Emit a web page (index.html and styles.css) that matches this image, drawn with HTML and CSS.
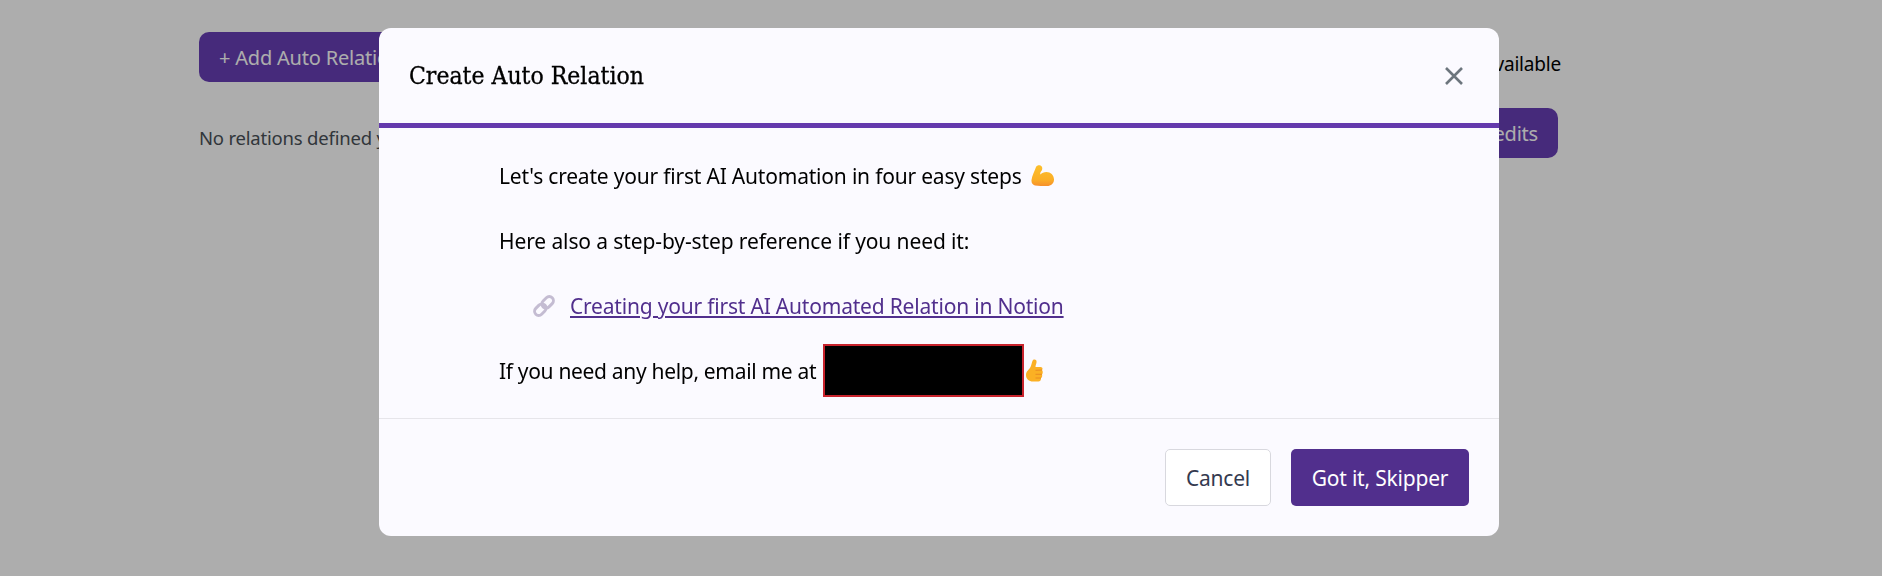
FILE: index.html
```html
<!DOCTYPE html>
<html lang="en">
<head>
    <meta charset="UTF-8">
    <meta name="viewport" content="width=device-width, initial-scale=1.0">
    <title>Create Auto Relation</title>
    <link rel="stylesheet" href="styles.css">
</head>
<body>
    <div class="page">
        <div class="relations">
            <button class="btn btn-primary btn-add">+ Add Auto Relation</button>
            <p class="empty">No relations defined yet</p>
        </div>
        <div class="credits">
            <p class="credits-text">0 credits available</p>
            <button class="btn btn-primary btn-credits">Buy credits</button>
        </div>
    </div>

    <div class="overlay">
        <div class="modal">
            <div class="modal-header">
                <h2 class="modal-title">Create Auto Relation</h2>
                <svg class="close" width="18" height="18" viewBox="0 0 18 18">
                    <path d="M1 1L17 17M17 1L1 17" stroke="#6c757d" stroke-width="2.600" fill="none"/>
                </svg>
            </div>
            <div class="modal-body">
                <p class="line">
                    <span>Let's create your first AI Automation in four easy steps</span>
                    <svg class="emoji-arm" width="23" height="21" viewBox="0 0 23 21">
                        <defs>
                            <linearGradient id="gold" x1="0" y1="0" x2="0" y2="1">
                                <stop offset="0" stop-color="#fcc02c"/>
                                <stop offset="0.700" stop-color="#fbae26"/>
                                <stop offset="1" stop-color="#f68f2c"/>
                            </linearGradient>
                        </defs>
                        <path d="M5 2C6 -.2 10 -.6 11 2C11.700 4 10.800 5.500 10 6.500C9.200 7.500 9 8.500 9.500 9.500C10.500 8 13 7 15.500 7C19.500 7 23 10 23 14.500C23 18.500 20 21 16 21C13 21 8 21.200 4 20.500C1.500 20 .2 18 .5 15C1 11 3.500 6 5 2Z" fill="url(#gold)"/>
                    </svg>
                </p>
                <p class="line line-ref">Here also a step-by-step reference if you need it:</p>
                <p class="line line-link">
                    <svg class="chain" width="22" height="22" viewBox="0 0 24 24">
                        <g fill="none" stroke="#c4bcd2" stroke-width="3.200">
                            <rect x="1" y="11.500" width="14" height="9" rx="4.500" transform="rotate(-45 8 16)"/>
                            <rect x="9" y="3.500" width="14" height="9" rx="4.500" transform="rotate(-45 16 8)"/>
                        </g>
                    </svg>
                    <a class="link" href="#">Creating your first AI Automated Relation in Notion</a>
                </p>
                <p class="line line-help">
                    <span>If you need any help, email me at</span>
                    <span class="redacted"></span>
                    <svg class="emoji-thumb" width="17" height="23" viewBox="0 0 17 23">
                        <path d="M7 1C9 -.2 11 1 10.500 3.500C10.200 5 9.500 6.500 9.500 8L14.500 8C16.500 8 17 10 16 11C17 12 17 14.500 16 15.500C16.500 17 16 18.500 15 19C15.200 21 14 22.500 12.500 22.500L7 22.500C3 22.500 0 20 0 16C0 12 3 11 4.500 8C5.500 6 6 2 7 1Z" fill="#fbb024"/>
                        <path d="M9.500 11.300L16 11M9.500 15.300L16 15.300M9.500 19L15 19" stroke="#ea8c22" stroke-width="1" fill="none"/>
                    </svg>
                </p>
            </div>
            <div class="modal-footer">
                <button class="btn btn-cancel">Cancel</button>
                <button class="btn btn-confirm">Got it, Skipper</button>
            </div>
        </div>
    </div>
</body>
</html>
```

FILE: styles.css
```css
* {
    box-sizing: border-box;
}
body {
    margin: 0;
    height: 576px;
    overflow: hidden;
    font-family: "Noto Sans", sans-serif;
    letter-spacing: -0.2px;
    background-color: #fff;
    color: #000;
}
p {
    margin: 0;
}
.btn {
    font-family: inherit;
    letter-spacing: inherit;
    font-size: 20px;
    cursor: pointer;
}
.btn-primary {
    height: 50px;
    border: none;
    border-radius: 10px;
    padding: 0 20px;
    background-color: #683fb5;
    color: #fff;
}
.page {
    display: flex;
    justify-content: space-between;
    padding: 32px 324px 0 199px;
}
.empty {
    margin-top: 43px;
    font-size: 18.500px;
    color: #495057;
}
.credits {
    display: flex;
    flex-direction: column;
    align-items: flex-end;
}
.credits-text {
    margin-top: 19px;
    font-size: 19px;
    margin-right: -3px;
}
.btn-credits {
    margin-top: 31px;
}
.overlay {
    position: fixed;
    top: 0;
    left: 0;
    right: 0;
    bottom: 0;
    background-color: rgba(0, 0, 0, 0.32);
    display: flex;
    justify-content: center;
    align-items: flex-start;
    padding-top: 28px;
    padding-right: 4px;
}
.modal {
    width: 1120px;
    height: 508px;
    border-radius: 12px;
    background-color: #fbfaff;
    overflow: hidden;
}
.modal-header {
    height: 100px;
    border-bottom: 5px solid #6439ad;
    display: flex;
    align-items: center;
    justify-content: space-between;
    padding: 0 36px 0 30px;
}
.modal-title {
    margin: 0;
    font-family: "DejaVu Serif", serif;
    font-stretch: condensed;
    font-size: 24.500px;
    font-weight: 400;
    letter-spacing: 0;
    -webkit-text-stroke: 0.3px #000;
}
.modal-body {
    height: 291px;
    padding: 15px 0 0 120px;
    border-bottom: 1px solid #e6e5ea;
}
.line {
    height: 65px;
    display: flex;
    align-items: center;
    font-size: 21px;
}
.line-ref {
    letter-spacing: -0.11px;
}
.line-help {
    letter-spacing: -0.32px;
}
.emoji-arm {
    margin-left: 9px;
}
.emoji-thumb {
    margin-left: 2px;
}
.line-link {
    padding-left: 34px;
}
.chain {
    margin-right: 15px;
}
.link {
    color: #512f8d;
}
.redacted {
    width: 201px;
    height: 53px;
    margin-left: 7px;
    background-color: #000;
    border: 2px solid #c8232c;
}
.modal-footer {
    display: flex;
    justify-content: flex-end;
    gap: 20px;
    padding: 30px 30px 0 0;
}
.btn-cancel, .btn-confirm {
    height: 57px;
    border-radius: 5px;
    font-size: 21px;
}
.btn-cancel {
    width: 106px;
    background-color: #fff;
    border: 1px solid #d8d8de;
    color: #343a50;
}
.btn-confirm {
    width: 178px;
    background-color: #512f8d;
    border: none;
    color: #fff;
}
```
